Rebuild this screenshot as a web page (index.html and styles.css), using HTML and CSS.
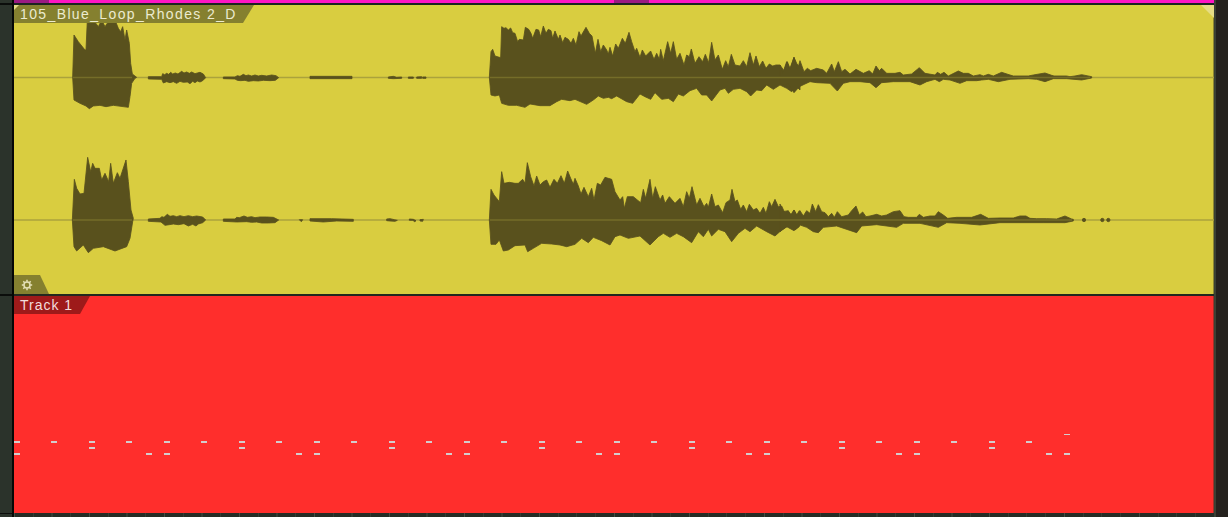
FILE: index.html
```html
<!DOCTYPE html>
<html lang="en">
<head>
  <meta charset="UTF-8" />
  <meta name="viewport" content="width=device-width, initial-scale=1.0" />
  <title>Arrangement</title>
  <link rel="stylesheet" href="styles.css">
</head>
<body>
  <div class="gutter gutterLeft"></div>

  <main class="tracks">
    <div class="ruler">
      <div class="rulerBar">
        <span class="rulerMark"></span>
        <span class="rulerFill"></span>
        <span class="rulerMark"></span>
        <span class="rulerFill"></span>
      </div>
    </div>

    <section class="clip clipAudio">
      <svg class="clipCanvas" viewBox="14 5 1200 289" aria-hidden="true">
        <line class="mid" x1="14" y1="77.5" x2="1214" y2="77.5" />
        <line class="mid" x1="14" y1="220" x2="1214" y2="220" />

        <!-- left channel: first hit + tails -->
        <g class="wave" transform="scale(.33333)">
          <polygon points="218,232 222,105 235,125 255,150 258,150 262,60 272,70 280,60 295,80 305,60 315,80 325,65 345,60 355,85 362,95 368,80 375,120 380,90 388,130 392,190 397,222 410,232 405,235 395,250 390,290 385,322 340,316 318,320 300,316 280,318 268,326 258,318 240,310 222,300" />
          <polygon points="445,230 485,230 488,221 494,224 500,220 506,223 512,217 518,222 526,219 534,222 545,214 552,219 560,216 568,220 575,216 585,221 592,219 600,217 610,222 617,233 608,242 600,246 592,243 585,248 578,244 570,251 562,246 550,247 540,244 530,250 520,245 510,248 500,245 490,249 485,238 445,237" />
          <polygon points="670,231 705,231 712,227 720,229 730,223 738,227 745,225 755,228 765,225 775,228 785,226 800,228 815,225 828,227 836,233 826,241 810,242 790,241 775,243 760,242 745,244 735,241 722,242 712,241 705,237 670,236" />
          <polygon points="930,229 1056,229 1056,236 930,236" />
          <polygon points="1165,231 1180,229 1190,232 1205,231 1205,235 1180,236 1165,235" />
          <polygon points="1225,231 1240,231 1240,235 1225,235" />
          <polygon points="1250,231 1265,230 1265,235 1250,235" />
          <polygon points="1268,231 1278,231 1278,235 1268,235" />
        </g>

        <!-- left channel: second hit, decaying -->
        <g class="wave" transform="translate(480 0) scale(.33333)">
          <polygon points="28,232 33,155 38,148 45,168 58,172 62,172 65,80 72,85 78,83 85,90 92,84 98,98 105,100 113,125 118,118 130,120 136,82 146,88 153,100 158,115 168,88 176,90 182,110 190,78 198,100 205,88 213,92 218,115 225,93 235,118 240,105 248,128 255,112 265,118 273,130 280,115 288,135 297,95 303,108 318,82 328,100 336,108 346,160 354,118 362,155 370,135 380,150 385,162 390,142 398,168 407,132 415,145 427,115 436,130 447,97 455,125 465,155 470,145 480,172 487,150 497,168 512,153 522,178 530,160 538,178 542,148 550,182 563,125 572,160 580,125 590,178 600,160 612,195 620,165 628,170 634,147 645,190 657,170 668,185 676,163 686,188 695,127 705,180 715,165 727,208 737,182 745,200 754,163 765,195 780,198 790,182 800,200 810,158 820,195 828,168 838,200 848,183 858,205 868,192 878,198 888,195 900,195 912,212 922,185 930,205 942,172 950,190 960,205 960,270 950,260 935,275 920,265 900,255 880,268 860,255 845,272 830,270 812,288 800,275 780,265 760,268 745,280 735,265 720,270 695,303 680,285 665,285 650,265 630,272 610,288 595,282 580,305 565,295 545,298 525,278 512,298 495,290 480,282 458,310 440,305 410,288 395,296 385,292 370,295 355,288 340,300 320,313 285,298 270,302 245,298 230,305 210,317 180,317 150,312 135,322 110,316 85,316 65,310 58,285 45,288 33,285" />
        </g>
        <g class="wave" transform="translate(780 40) scale(.33333)">
          <polygon points="0,75 8,100 20,65 30,90 42,52 52,90 60,62 72,95 82,85 92,92 110,85 130,90 140,100 155,72 163,95 175,65 185,95 195,88 210,102 228,88 250,100 268,92 278,102 288,78 298,92 305,85 320,100 345,100 360,97 370,105 395,102 418,83 435,100 465,105 472,97 482,103 492,97 505,108 535,93 550,100 565,100 580,108 600,104 610,108 625,103 640,108 665,97 690,105 700,108 745,108 760,105 795,99 815,106 822,108 860,108 870,110 885,108 905,104 935,110 935,114 905,120 860,116 820,116 795,125 770,118 745,116 690,118 655,125 625,118 605,120 590,122 560,122 540,130 510,120 490,118 478,125 465,118 440,125 420,135 390,125 340,125 305,128 288,143 270,128 240,125 210,125 190,130 172,153 150,130 110,128 90,125 75,132 58,140 42,158 25,130 10,135 0,130" />
        </g>

        <!-- right channel: first hit + tails -->
        <g class="wave" transform="translate(60 150) scale(.33333)">
          <polygon points="37,210 43,88 50,115 60,132 72,130 83,22 92,65 98,40 105,55 118,55 125,90 135,70 146,95 152,40 160,100 172,68 180,85 198,30 205,95 213,180 220,205 218,215 210,265 200,290 165,303 130,290 100,295 85,308 70,285 50,303 42,290" />
          <polygon points="265,207 300,205 305,200 312,202 322,193 330,199 340,197 350,200 360,197 372,200 385,197 398,200 410,198 428,201 437,210 428,218 415,222 408,228 398,223 385,228 372,221 355,224 340,222 328,224 315,226 303,216 265,214" />
          <polygon points="490,207 525,207 530,202 538,203 552,198 562,202 575,200 585,203 600,201 620,201 640,202 656,210 645,218 625,219 605,219 590,216 575,217 560,215 530,216 490,214" />
          <polygon points="718,209 728,209 724,215" />
          <polygon points="750,206 815,206 880,208 880,214 830,213 790,216 750,213" />
          <polygon points="980,207 990,206 1003,209 1012,211 1005,214 990,213 980,212" />
          <polygon points="1048,207 1060,208 1068,212 1060,211 1048,211" />
          <polygon points="1080,209 1090,208 1088,214 1080,213" />
          <polygon points="1060,212 1068,212 1064,215" />
        </g>

        <!-- right channel: second hit, decaying -->
        <g class="wave" transform="translate(480 150) scale(.33333)">
          <polygon points="28,210 33,118 42,135 58,155 65,65 72,100 88,97 105,100 115,100 128,88 135,100 142,38 152,80 162,108 170,78 180,105 190,95 200,90 210,112 222,88 232,100 243,77 253,100 263,63 272,85 280,103 285,85 295,108 303,132 312,112 325,140 335,115 342,150 352,100 362,105 375,82 385,85 395,88 405,125 420,150 428,140 433,175 442,140 460,140 472,150 482,158 490,118 497,145 510,88 518,145 526,110 540,150 548,135 555,160 568,140 585,160 600,145 610,170 620,125 628,145 636,110 650,165 660,145 672,170 680,160 685,172 695,132 705,170 715,165 728,188 738,158 750,150 756,118 765,155 772,150 782,178 790,165 800,185 808,163 820,180 830,175 840,190 850,172 858,190 868,155 875,170 885,148 895,170 905,168 915,190 925,185 935,195 942,180 950,195 958,182 958,230 945,240 930,225 905,240 885,258 860,245 830,228 810,245 795,235 775,250 755,275 735,245 715,238 695,258 685,238 670,260 655,245 635,278 610,260 590,250 570,262 550,250 535,260 510,285 480,258 445,265 420,255 405,260 390,285 365,272 340,262 325,278 305,265 285,283 260,290 240,285 215,282 185,280 160,295 143,305 135,285 105,287 85,300 70,303 58,270 48,283 33,283" />
        </g>
        <g class="wave" transform="translate(780 190) scale(.33333)">
          <polygon points="0,42 8,65 25,62 32,75 42,60 52,78 60,62 70,78 80,62 90,70 97,42 107,65 115,44 125,65 135,68 145,80 155,70 163,82 172,65 185,80 205,75 215,62 228,48 238,75 248,66 258,80 270,78 290,73 305,78 320,75 340,65 360,62 372,80 385,82 410,82 418,73 430,82 450,78 465,78 475,65 490,75 503,85 530,82 555,82 575,82 602,73 625,85 660,84 700,84 720,78 738,78 750,85 770,86 800,86 830,87 855,78 875,87 880,88 880,93 855,98 790,98 720,98 660,98 600,105 540,100 500,98 475,112 420,100 370,100 350,112 290,104 245,108 230,128 170,108 130,112 115,128 100,125 80,112 60,105 42,122 20,110 0,125" />
          <circle cx="912" cy="90" r="5" />
          <circle cx="967" cy="90" r="5" />
          <circle cx="985" cy="90" r="5" />
        </g>

        <line class="midOver" x1="490" y1="77.5" x2="1090" y2="77.5" />
        <line class="midOver" x1="73" y1="77.5" x2="132" y2="77.5" />
        <line class="midOver" x1="490" y1="220" x2="1072" y2="220" />
        <line class="midOver" x1="73" y1="220" x2="132" y2="220" />
      </svg>

      <span class="clipCorner"></span>
      <div class="tab tabAudio">105_Blue_Loop_Rhodes 2_D</div>
      <div class="tab tabGear">
        <svg class="gear" viewBox="0 0 12 12" aria-hidden="true">
          <circle cx="6" cy="6" r="3" />
          <path d="M6 .8v2M6 9.2v2M.8 6h2M9.2 6h2M2.3 2.3l1.4 1.4M8.3 8.3l1.4 1.4M2.3 9.7l1.4-1.4M8.3 3.7l1.4-1.4" />
        </svg>
      </div>
    </section>

    <div class="divider"></div>

    <section class="clip clipMidi">
      <svg class="clipCanvas" viewBox="14 296 1200 217" aria-hidden="true">
        <defs>
          <g id="bar">
            <rect x="14" y="441" width="6" height="2" />
            <rect x="14" y="453" width="6" height="2" />
            <rect x="51" y="441" width="6" height="2" />
            <rect x="89" y="441" width="6" height="2" />
            <rect x="89" y="447" width="6" height="2" />
            <rect x="126" y="441" width="6" height="2" />
            <rect x="146" y="453" width="6" height="2" />
          </g>
        </defs>
        <g class="notes">
          <use href="#bar" />
          <use href="#bar" x="150" />
          <use href="#bar" x="300" />
          <use href="#bar" x="450" />
          <use href="#bar" x="600" />
          <use href="#bar" x="750" />
          <use href="#bar" x="900" />
          <rect x="1064" y="434" width="6" height="1" />
          <rect x="1064" y="453" width="6" height="2" />
        </g>
      </svg>
      <div class="tab tabMidi">Track 1</div>
    </section>

    <div class="ticks"></div>
  </main>

  <div class="gutter gutterRight"></div>
</body>
</html>
```

FILE: styles.css
```css
* { box-sizing: border-box; }

html, body {
  margin: 0;
  padding: 0;
  height: 517px;
  overflow: hidden;
  background: #25221e;
}

body {
  display: flex;
  font-family: "Liberation Sans", Arial, sans-serif;
}

.gutterLeft {
  width: 14px;
  border-right: 2px solid #050705;
  background:
    linear-gradient(#0b0d0b, #0b0d0b) 0 3px / 100% 2px no-repeat,
    linear-gradient(#0b0d0b, #0b0d0b) 0 294px / 100% 2px no-repeat,
    linear-gradient(#0b0d0b, #0b0d0b) 0 513px / 100% 1px no-repeat,
    #2b332b;
}

.gutterRight {
  flex: 1;
  border-left: 2px solid #3a4034;
  background: #25221e;
}

.tracks {
  width: 1200px;
  display: flex;
  flex-direction: column;
}

.ruler {
  height: 5px;
  background: #1c2320;
}

.rulerBar {
  height: 3px;
  display: flex;
}

.rulerMark {
  width: 35px;
  background: #9b1a82;
}

.rulerFill {
  background: #ff14c4;
}

.rulerFill:nth-child(2) {
  width: 565px;
}

.rulerFill:nth-child(4) {
  flex: 1;
}

.clip {
  position: relative;
  box-shadow: inset -1px 0 0 rgba(50, 50, 30, 0.45);
}

.clipCanvas {
  display: block;
  width: 100%;
  height: 100%;
}

.clipAudio {
  height: 289px;
  background: #d9cd40;
}

.clipMidi {
  height: 217px;
  background: #ff2e2c;
}

.clipCorner {
  position: absolute;
  top: 0;
  right: 0;
  width: 13px;
  height: 13px;
  background: #e6dd85;
  clip-path: polygon(0 0, 100% 0, 100% 100%);
}

.divider {
  height: 2px;
  background: #23281f;
}

.ticks {
  flex: 1;
  background:
    repeating-linear-gradient(90deg, #444c42 0 1px, transparent 1px 75px) 0 0,
    repeating-linear-gradient(90deg, #343c33 0 1px, transparent 1px 18.75px) 0 0,
    #252c25;
}

.wave {
  fill: #59511d;
  stroke: #59511d;
  stroke-width: 2.5;
  stroke-linejoin: round;
}

.mid {
  stroke: #aba23c;
  stroke-width: 1.3;
}

.midOver {
  stroke: #756d28;
  stroke-width: 1.3;
}

.notes {
  fill: #d4cccc;
}

.tab {
  position: absolute;
  left: 0;
  height: 18px;
  padding-left: 6px;
  font-size: 14px;
  line-height: 18px;
  letter-spacing: 1px;
  white-space: nowrap;
}

.tabAudio {
  top: 0;
  width: 240px;
  background: #85802f;
  color: #ecebd0;
  letter-spacing: 1.38px;
  clip-path: polygon(0 0, 100% 0, 229px 100%, 0 100%);
}

.tabAudio::before {
  content: "";
  position: absolute;
  top: 0;
  left: 0;
  width: 5px;
  height: 5px;
  background: #e6dd85;
  clip-path: polygon(0 0, 100% 0, 0 100%);
}

.tabGear {
  top: 270px;
  width: 35px;
  height: 19px;
  background: #85802f;
  clip-path: polygon(0 0, 26px 0, 100% 100%, 0 100%);
}

.gear {
  display: block;
  width: 12px;
  height: 12px;
  margin: 4px 0 0 1px;
  fill: none;
  stroke: #e4e0b8;
  stroke-width: 1.5;
}

.tabMidi {
  top: 0;
  width: 76px;
  background: #9e1a1a;
  color: #f2dcdc;
  clip-path: polygon(0 0, 100% 0, 66px 100%, 0 100%);
}
```
